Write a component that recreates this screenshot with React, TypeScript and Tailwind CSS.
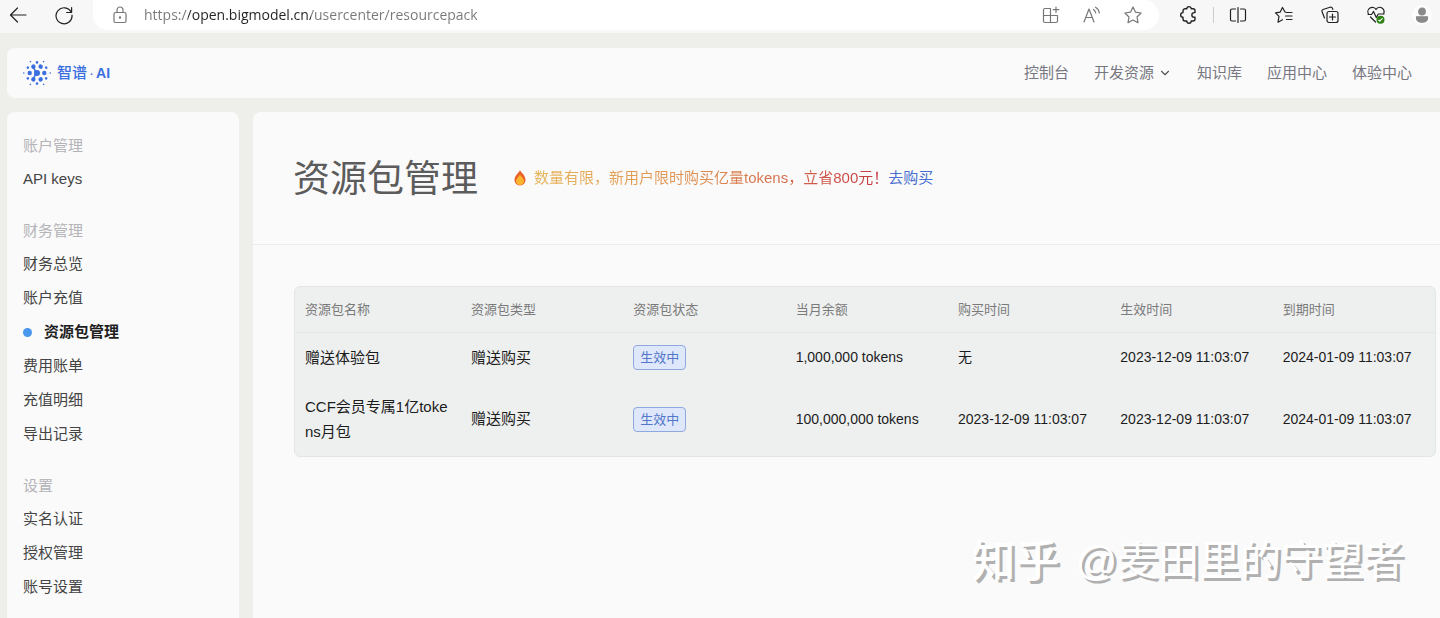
import type { ReactNode } from "react";
import { ChevronDown } from "lucide-react";
import clsx from "clsx";

const navLinks = ["控制台", "开发资源", "知识库", "应用中心", "体验中心"];

const menuGroups = [
  { title: "账户管理", items: ["API keys"] },
  {
    title: "财务管理",
    items: [
      "财务总览",
      "账户充值",
      "资源包管理",
      "费用账单",
      "充值明细",
      "导出记录",
    ],
  },
  { title: "设置", items: ["实名认证", "授权管理", "账号设置"] },
];

const columns = [
  "资源包名称",
  "资源包类型",
  "资源包状态",
  "当月余额",
  "购买时间",
  "生效时间",
  "到期时间",
];

const packs = [
  {
    name: "赠送体验包",
    type: "赠送购买",
    status: "生效中",
    balance: "1,000,000 tokens",
    boughtAt: "无",
    startsAt: "2023-12-09 11:03:07",
    endsAt: "2024-01-09 11:03:07",
  },
  {
    name: "CCF会员专属1亿tokens月包",
    type: "赠送购买",
    status: "生效中",
    balance: "100,000,000 tokens",
    boughtAt: "2023-12-09 11:03:07",
    startsAt: "2023-12-09 11:03:07",
    endsAt: "2024-01-09 11:03:07",
  },
];

function Icon({
  children,
  className,
}: {
  children: ReactNode;
  className?: string;
}) {
  return (
    <svg
      aria-hidden="true"
      className={clsx("h-5 w-5 shrink-0", className)}
      fill="none"
      stroke="currentColor"
      strokeLinecap="round"
      strokeLinejoin="round"
      strokeWidth="1.2"
      viewBox="0 0 20 20"
    >
      {children}
    </svg>
  );
}

function ToolButton({
  label,
  children,
}: {
  label: string;
  children: ReactNode;
}) {
  return (
    <button aria-label={label} className="flex shrink-0" type="button">
      {children}
    </button>
  );
}

function BrowserBar() {
  return (
    <div className="flex h-[33px] items-start bg-[#f7f7f7] pr-2 text-[#222]">
      <div className="flex h-[30px] w-[93px] shrink-0 items-center gap-[25px] pl-2">
        <ToolButton label="Back">
          <Icon>
            <path d="M18 10H2.5M9.5 3 2.5 10l7 7" />
          </Icon>
        </ToolButton>
        <ToolButton label="Refresh">
          <Icon className="ml-px">
            <path d="M17.2 7.2A8 8 0 1 0 18 10" />
            <path d="M17.6 2.5v5h-5" />
          </Icon>
        </ToolButton>
      </div>

      <div className="flex h-[30px] min-w-0 flex-1 items-center rounded-r-2xl rounded-bl-2xl bg-white pr-4 pl-[17px] text-[#777]">
        <Icon>
          <rect height="10" rx="1.5" width="12" x="4" y="7.5" />
          <path d="M7 7.5V5a3 3 0 0 1 6 0v2.5" />
          <circle cx="10" cy="12.5" fill="currentColor" r=".6" />
        </Icon>
        <input
          aria-label="Address"
          className="ml-[14px] min-w-0 flex-1 bg-[linear-gradient(to_right,#777_44px,#222_44px,#222_167px,#777_167px)] bg-clip-text font-['Open_Sans','Noto_Sans',sans-serif] text-sm text-transparent outline-none"
          defaultValue="https://open.bigmodel.cn/usercenter/resourcepack"
          type="text"
        />
        <div className="flex gap-[21px]">
          <ToolButton label="Apps">
            <Icon>
              <path d="M9 3.5H4A1.5 1.5 0 0 0 2.5 5v11A1.5 1.5 0 0 0 4 17.5h11a1.5 1.5 0 0 0 1.5-1.5v-5.500h-14M9.500 3.500v14M15 2v5.500M12.200 4.700h5.600" />
            </Icon>
          </ToolButton>
          <ToolButton label="Read aloud">
            <Icon>
              <path d="m2 17 5-13 5 13M3.800 12.500h6.400M11.500 4.500c1.200.8 2 2 2.200 3.500M13.500 2.200c2.200 1.200 3.500 3.200 3.800 5.800" />
            </Icon>
          </ToolButton>
          <ToolButton label="Favorite">
            <Icon>
              <path d="m10 2 2.500 5.200 5.600.8-4.100 4 1 5.700-5-2.700-5 2.700 1-5.700-4.100-4 5.600-.8z" />
            </Icon>
          </ToolButton>
        </div>
      </div>

      <div className="ml-5 flex h-[30px] items-center">
        <ToolButton label="Extensions">
          <Icon>
            <path
              d="M6 3.800h1.800a2.200 2.200 0 0 1 4.400 0H14a2 2 0 0 1 2 2v1.800h-.8a2.300 2.300 0 0 0 0 4.700h.8V14a2 2 0 0 1-2 2h-1.800a2.200 2.200 0 0 1-4.400 0H6a2 2 0 0 1-2-2v-1.700a2.300 2.300 0 0 1 0-4.700V5.800a2 2 0 0 1 2-2z"
              strokeWidth="1.400"
            />
          </Icon>
        </ToolButton>
        <span className="ml-[14px] h-4 w-px bg-[#ccc]" />
        <div className="ml-[14px] flex gap-[26px]">
          <ToolButton label="Split screen">
            <Icon>
              <path d="M7.500 4H4a1.500 1.500 0 0 0-1.500 1.500v9A1.500 1.500 0 0 0 4 16h3.500M12.500 4H16a1.500 1.500 0 0 1 1.500 1.500v9A1.500 1.500 0 0 1 16 16h-3.500M10 2.500v15" />
            </Icon>
          </ToolButton>
          <ToolButton label="Favorites">
            <Icon>
              <path d="M12 7.300 11 7 8.500 2.500 6.200 7.100l-4.700.7 3.500 3.600-1 5.800 4.500-2.400M12.500 7.500H18M11.500 11H18M12.500 14.500H18" />
            </Icon>
          </ToolButton>
          <ToolButton label="Collections">
            <Icon>
              <rect height="11" rx="2" width="11" x="7" y="6.500" />
              <path d="M12.500 9v6M9.500 12h6M4.500 13 2 6.500a1.500 1.500 0 0 1 1-2l7-2.300a2 2 0 0 1 2.500 1.200l.3 1" />
            </Icon>
          </ToolButton>
          <ToolButton label="Browser essentials">
            <Icon>
              <path d="M2.500 9A4.300 4.300 0 0 1 10 4.500 4.300 4.300 0 0 1 17.500 9M2 9.500h3.500l2-3 2.800 6 2-3.500H18M4.500 12l5 5" />
              <circle cx="14.500" cy="14.800" fill="#2d8113" r="4" stroke="none" />
              <path d="m12.800 15.300 1 .8 2.400-2.400" stroke="#fff" />
            </Icon>
          </ToolButton>
          <ToolButton label="Profile">
            <Icon className="rounded-full bg-[#fdfdfd] text-[#8a8a8a]">
              <circle cx="10" cy="6.500" fill="currentColor" r="3.300" />
              <path
                d="M4.500 11.800h11v1.200c0 3-2.500 4.200-5.500 4.200s-5.500-1.200-5.500-4.200z"
                fill="currentColor"
              />
            </Icon>
          </ToolButton>
        </div>
      </div>
    </div>
  );
}

function Logo() {
  return (
    <a className="flex items-center gap-[6px] text-[#3b6fe0]" href="#home">
      <svg
        aria-hidden="true"
        className="h-7 w-7"
        fill="currentColor"
        viewBox="-14 -14 28 28"
      >
        <circle r="3" />
        {[0, 60, 120, 180, 240, 300].map((angle) => (
          <g key={angle} transform={`rotate(${angle})`}>
            <circle cx="7.300" r="2.200" />
            <circle cx="13.200" r=".8" />
          </g>
        ))}
        {[30, 90, 150, 210, 270, 330].map((angle) => (
          <circle
            cx="10.600"
            key={angle}
            r="1.300"
            transform={`rotate(${angle})`}
          />
        ))}
        <path
          d="M-3.600-6.300-1 0l-2.600 6.300"
          fill="none"
          stroke="currentColor"
          strokeWidth="1.600"
        />
      </svg>
      <span className="flex items-center gap-[2px] text-[15px] font-medium">
        智谱
        <span>·</span>
        <span className="font-['Liberation_Sans_Narrow','Liberation_Sans',sans-serif] text-sm font-bold">
          AI
        </span>
      </span>
    </a>
  );
}

function Flame() {
  return (
    <svg aria-hidden="true" className="h-4 w-3" viewBox="0 0 12 16">
      <path
        d="M6 0c.8 2.500 5.500 5.200 5.500 9.800 0 3.500-2.400 5.700-5.500 5.700S.5 13.300.5 9.800c0-2.400 1.200-4 2.300-5.400C4 3 5.500 1.800 6 0z"
        fill="#e8622a"
      />
      <path
        d="M6 4.500c.7 1.800 4 3.700 4 6.700 0 2.400-1.800 3.800-4 3.800s-4-1.400-4-3.800c0-2.700 3.200-4.600 4-6.700z"
        fill="#fbb52d"
      />
    </svg>
  );
}

function Sidebar() {
  return (
    <aside className="w-[232px] shrink-0 rounded-t-lg bg-[#fafafa] px-4 pt-[18px] text-[15px]">
      {menuGroups.map((group) => (
        <section className="mb-[19px]" key={group.title}>
          <h2 className="flex h-8 items-center text-[#b4b4b8]">
            {group.title}
          </h2>
          <ul>
            {group.items.map((item) => {
              const active = item === "资源包管理";

              return (
                <li key={item}>
                  <a
                    className={clsx(
                      "flex h-[34px] items-center",
                      active ? "font-bold text-[#1f1f1f]" : "text-[#444]",
                    )}
                    href="#menu"
                  >
                    {active ? (
                      <span className="mr-3 h-[9px] w-[9px] rounded-full bg-[#4797ec]" />
                    ) : null}
                    {item}
                  </a>
                </li>
              );
            })}
          </ul>
        </section>
      ))}
    </aside>
  );
}

function PackTable() {
  return (
    <div className="overflow-hidden rounded-md border border-[#e3e6e6] bg-[#eef0f0]">
      <table className="w-full table-fixed text-left">
        <thead>
          <tr className="h-[45px] border-b border-[#e3e6e6] text-[13px] text-[#7a7a7a]">
            {columns.map((column) => (
              <th
                className="px-[10px] font-normal first:w-[166px]"
                key={column}
              >
                {column}
              </th>
            ))}
          </tr>
        </thead>
        <tbody className="text-[15px] leading-[25px] text-[#1c1c1c]">
          {packs.map((pack) => (
            <tr key={pack.name}>
              <td className="px-[10px] py-3 break-all">{pack.name}</td>
              <td className="px-[10px]">{pack.type}</td>
              <td className="px-[10px]">
                <span className="inline-flex h-[25px] items-center rounded border border-[#8fa9e0] bg-[#dfe8fb] px-[6px] text-[13px] text-[#5277c9]">
                  {pack.status}
                </span>
              </td>
              <td className="px-[10px] text-sm">{pack.balance}</td>
              <td className="px-[10px] text-sm">{pack.boughtAt}</td>
              <td className="px-[10px] text-sm">{pack.startsAt}</td>
              <td className="px-[10px] text-sm">{pack.endsAt}</td>
            </tr>
          ))}
        </tbody>
      </table>
    </div>
  );
}

export default function App() {
  return (
    <div className="relative flex min-h-screen flex-col bg-[#eeeeea] font-['Liberation_Sans','Noto_Sans_CJK_SC',sans-serif]">
      <BrowserBar />

      <header className="mt-[15px] ml-[7px] flex h-[50px] items-center justify-between rounded-l-lg bg-[#fafafa] pr-7 pl-4">
        <Logo />
        <nav className="flex gap-[25px] text-[15px] text-[#777781]">
          {navLinks.map((link) => (
            <a className="flex items-center gap-1" href="#nav" key={link}>
              {link}
              {link === "开发资源" ? (
                <ChevronDown className="h-[14px] w-[14px] text-[#555]" />
              ) : null}
            </a>
          ))}
        </nav>
      </header>

      <div className="mt-[14px] ml-[7px] flex flex-1 gap-[14px]">
        <Sidebar />
        <main className="min-w-0 flex-1 rounded-tl-lg bg-[#fafafa]">
          <div className="flex h-[133px] items-center gap-9 border-b border-[#ededed] pl-10">
            <h1 className="pt-1 text-[37px] text-[#5c5c5c]">资源包管理</h1>
            <p className="flex items-center text-[15px]">
              <Flame />
              <span className="ml-2 bg-linear-to-r from-[#e6b457] via-[#dd8a52] to-[#c4303f] bg-clip-text text-transparent">
                数量有限，新用户限时购买亿量tokens，立省800元！
              </span>
              <a className="text-[#4a6fd0]" href="#buy">
                去购买
              </a>
            </p>
          </div>
          <div className="pt-[41px] pr-1 pl-[41px]">
            <PackTable />
          </div>
        </main>
      </div>

      <div className="pointer-events-none absolute right-9 bottom-7 flex items-center gap-4 text-[41px] text-white [text-shadow:3px_3px_0_#b0b0b0]">
        <span className="text-[44px] font-medium">知乎</span>
        <span>@麦田里的守望者</span>
      </div>
    </div>
  );
}
